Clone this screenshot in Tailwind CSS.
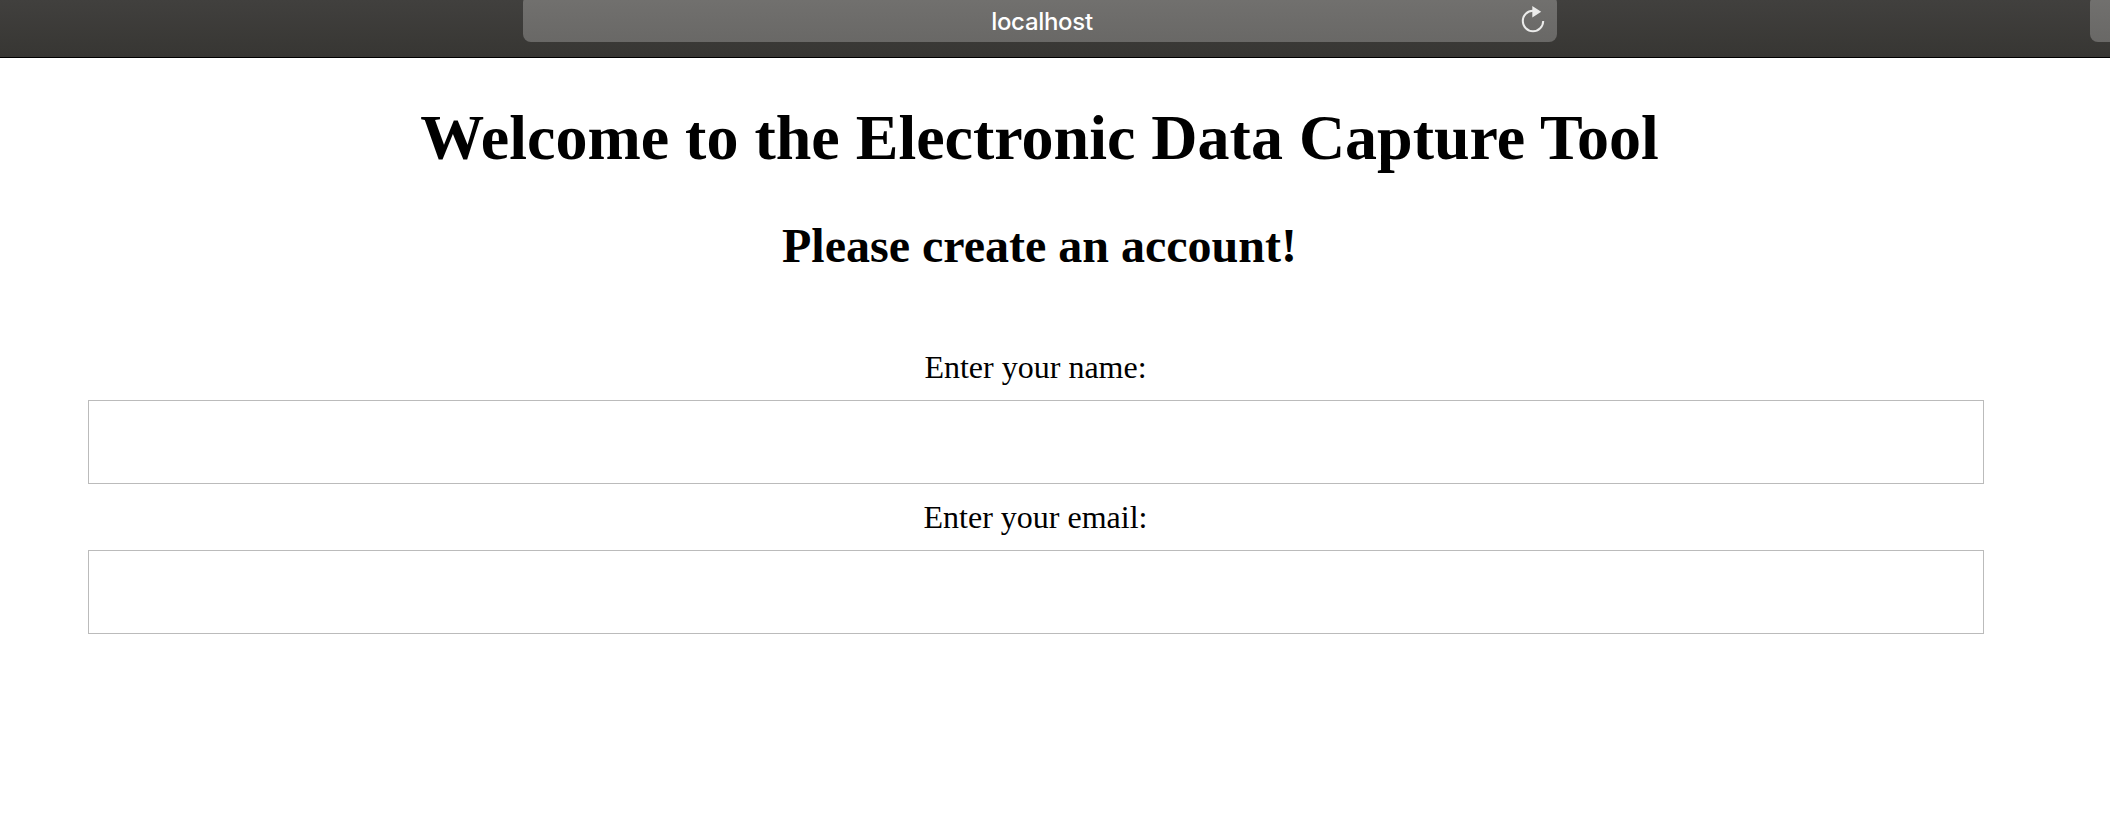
<!DOCTYPE html>
<html lang="en"><head><meta charset="utf-8"><title>Electronic Data Capture Tool</title>
<script src="https://cdn.jsdelivr.net/npm/@tailwindcss/browser@4"></script></head>
<body class="bg-white text-black font-['Liberation_Serif',serif] h-[836px] overflow-hidden">
<header class="h-[58px] bg-linear-to-b from-[#41403e] to-[#373633] border-b border-black flex items-start overflow-hidden">
<div class="-mt-[5px] ml-[523px] w-[1034px] h-[47px] rounded-lg bg-linear-to-b from-[#72716f] to-[#696866] flex items-center relative">
<span class="w-full pt-[7px] pl-[4px] text-center text-white text-[24px] leading-[40px] font-medium tracking-[-0.3px] font-['Inter',sans-serif]">localhost</span>
<svg class="absolute right-[11px] top-[9px]" width="26" height="30" viewBox="0 0 26 30" fill="none" stroke="#ebebea" stroke-width="2"><path d="M13 6.8A10.2 10.2 0 1 0 23.2 17"/><path d="M12.3 2L21.2 7.7L12.3 13.4Z" fill="#ebebea" stroke="none"/></svg>
</div>
<div class="-mt-[5px] ml-auto w-[20px] h-[47px] rounded-l-lg bg-linear-to-b from-[#72716f] to-[#696866]"></div>
</header>
<main class="flex flex-col items-center w-[1896px] ml-[88px]">
<h1 class="mt-[43px] pl-[7px] h-[74px] leading-[74px] text-[64px] font-bold whitespace-nowrap">Welcome to the Electronic Data Capture Tool</h1>
<h2 class="mt-[43px] pl-[7px] h-[56px] leading-[56px] text-[48px] font-bold whitespace-nowrap">Please create an account!</h2>
<form class="w-full mt-[75px] flex flex-col items-center">
<label for="name" class="pr-px text-[32px] leading-[36px]">Enter your name:</label>
<input id="name" class="mt-[15px] w-full h-[84px] border border-[#bbb]">
<label for="email" class="mt-[15px] pr-px text-[32px] leading-[36px]">Enter your email:</label>
<input id="email" class="mt-[15px] w-full h-[84px] border border-[#bbb]">
</form></main></body></html>
